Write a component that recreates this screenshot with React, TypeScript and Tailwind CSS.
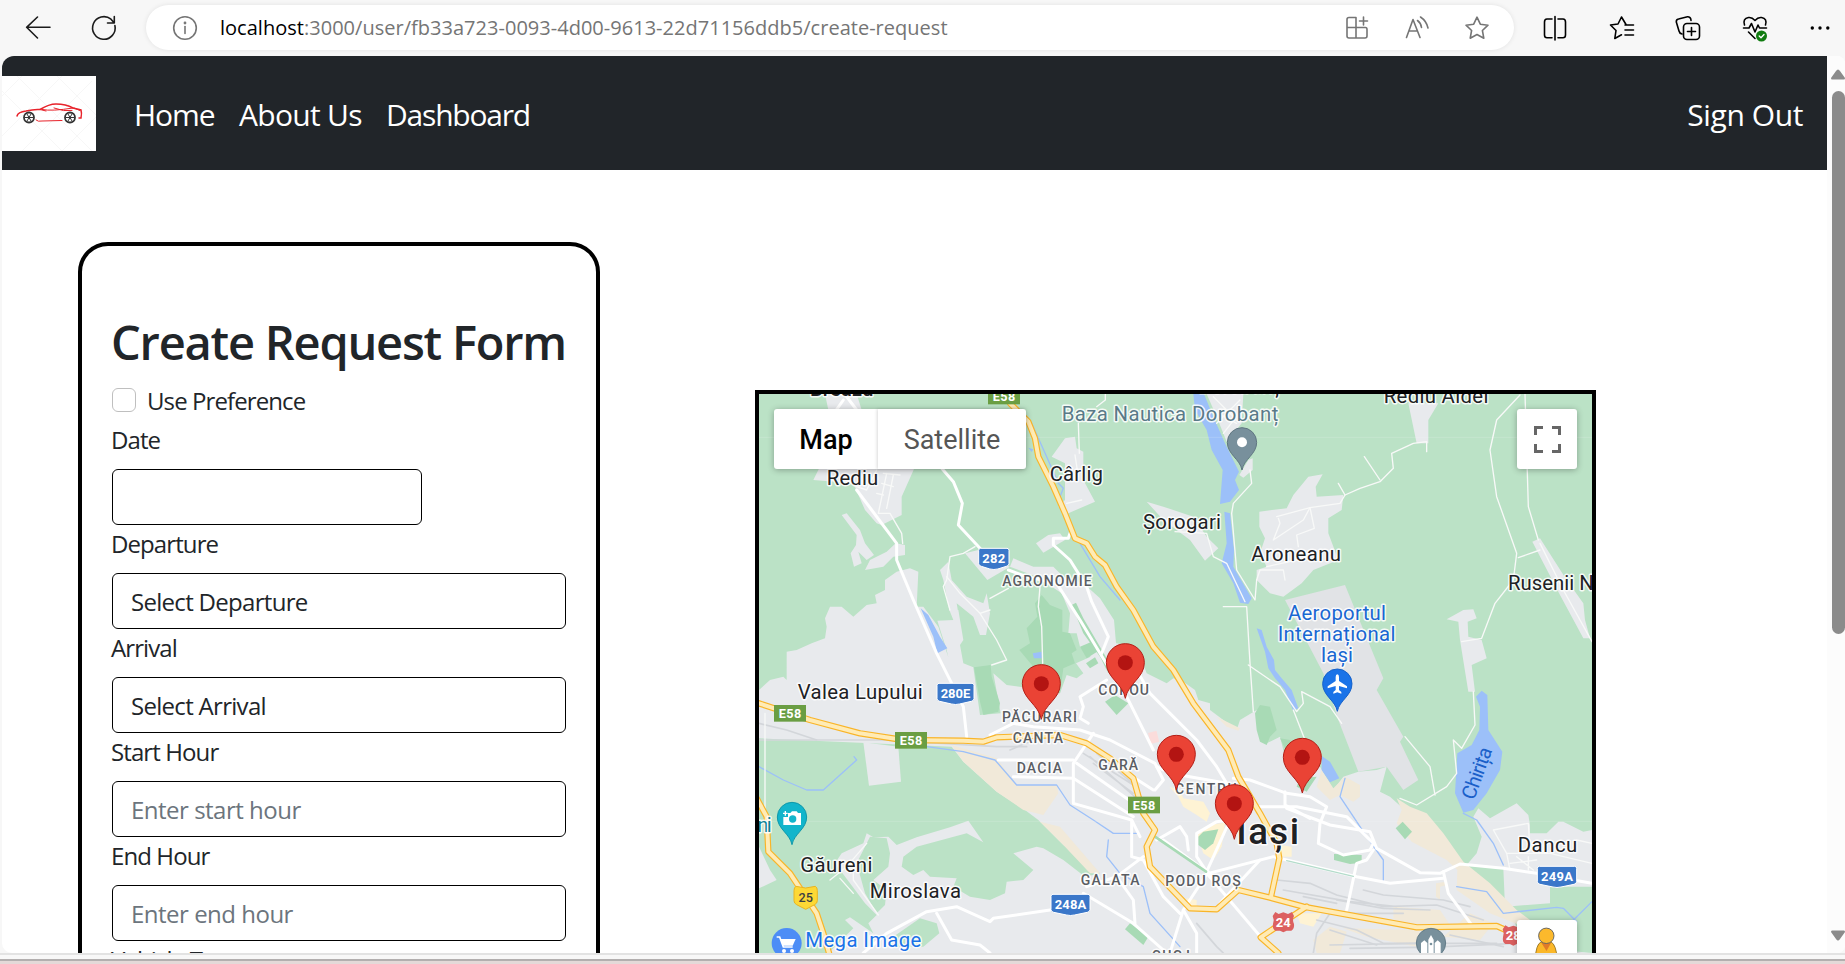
import type { ReactNode } from "react";

const UI = "font-['Open_Sans','Noto_Sans',sans-serif]";

/* ---------- browser toolbar ---------- */

function Icon({ children, className = "", w = 28 }: { children: ReactNode; className?: string; w?: number }) {
  return (
    <svg width={w} height={28} viewBox={`0 0 ${w} 28`} fill="none" stroke="currentColor" strokeWidth={1.6} strokeLinecap="round" strokeLinejoin="round" className={`shrink-0 ${className}`}>
      {children}
    </svg>
  );
}

const STAR = "M14 3.2 L17.3 10.2 L25 11.2 L19.4 16.5 L20.8 24.2 L14 20.5 L7.2 24.2 L8.6 16.5 L3 11.2 L10.7 10.2 Z";

function Toolbar() {
  return (
    <header className="flex h-[56px] shrink-0 items-start bg-[#f7f7f7] text-[#1b1b1b]">
      <div className="flex h-[55px] w-[146px] items-center gap-[38px] pl-[24px]">
        <Icon>
          <path d="M26 13.3H3M13.5 3L2.6 13.3L13.5 24" />
        </Icon>
        <Icon>
          <path d="M24.900 11.500A11.300 11.300 0 1 1 21 5.200L24.300 9M24.300 2.500V9H17.500" />
        </Icon>
      </div>
      <div className="mt-[5px] flex h-[45px] w-[1368px] items-center rounded-full bg-white pl-[25px] pr-[23px] text-[#757575] shadow-[0_0_5px_rgba(0,0,0,0.09)]">
        <Icon>
          <circle cx="14" cy="14" r="11.3" />
          <path d="M14 12.5V19.5" />
          <circle cx="14" cy="9" r="0.6" fill="currentColor" />
        </Icon>
        <span className={`ml-[21px] whitespace-nowrap text-[20px] leading-none tracking-[0.02px] ${UI}`}>
          <span className="text-black">localhost</span>:3000/user/fb33a723-0093-4d00-9613-22d71156ddb5/create-request
        </span>
        <div className="ml-auto flex gap-[32px]">
          <Icon>
            <path d="M4 5.5Q4 3.5 6 3.5H13V24H6Q4 24 4 22ZM4 13.5H22.5Q24 13.5 24 15.5V22Q24 24 22 24H13M20.5 3V11M16.5 7H24.5" />
          </Icon>
          <Icon>
            <path d="M3.500 23.500L10 5.500L17 23.500M6 17H14.500M14.500 6.500Q18 9 18.500 13.500M17.500 3Q23.500 7 25 14" />
          </Icon>
          <Icon>
            <path d={STAR} />
          </Icon>
        </div>
      </div>
      <div className="flex h-[55px] flex-1 items-center gap-[38.5px] pl-[27px] text-black">
        <Icon>
          <path d="M11 5H6Q3.500 5 3.500 8V21Q3.500 23.700 6 23.700H11M17 5H22Q24.500 5 24.500 8V21Q24.500 23.700 22 23.700H17M14 2.500V26" />
        </Icon>
        <Icon>
          <path d="M18 10.500L13.500 3L10 10L2.500 11L8 16.500L6.800 24.500L13.500 20.800M17 11H25.500M17 16H25.500M17 21H25.500" />
        </Icon>
        <Icon>
          <path d="M8 20Q5.500 19.500 5 17L2.300 8Q2 5.500 4.500 5L13.500 2.700Q16 2.500 16.800 5L17 6.500" />
          <rect x="9.500" y="9.500" width="16" height="16" rx="3.500" />
          <path d="M17.500 13.500V21.500M13.500 17.500H21.500" />
        </Icon>
        <Icon>
          <path d="M3.500 11Q1.500 4.500 7.500 3.500Q11 3 14 6.500Q17 3 20.500 3.500Q26.500 4.500 24.500 11M2.500 14H8L10.500 9.500L14 18L17 11L18.500 14H25.500M7.500 18L14 24.500" />
          <circle cx="20.500" cy="22" r="5.500" fill="#107c10" stroke="none" />
          <path d="M18.200 22L20 23.800L23 20.500" stroke="#fff" strokeWidth="1.300" />
        </Icon>
        <Icon>
          <g fill="currentColor" stroke="none">
            <circle cx="5.300" cy="14" r="1.700" />
            <circle cx="13" cy="14" r="1.700" />
            <circle cx="20.800" cy="14" r="1.700" />
          </g>
        </Icon>
      </div>
    </header>
  );
}

/* ---------- site header ---------- */

function CarLogo() {
  return (
    <svg viewBox="0 0 94 75" className="h-[75px] w-[94px] bg-white">
      <g stroke="#f7f7f7" strokeWidth="1">
        <path d="M0 20L20 0M0 60L60 0M20 75L90 5M60 75L94 41M0 15L60 75M15 0L90 75M55 0L94 39" />
      </g>
      <g fill="none" stroke="#e8232b" strokeWidth="1.500" strokeLinecap="round">
        <path d="M15 40Q16 36 24 35Q32 33 38 33.500Q47 28 54 28Q64 28 71 32L79 34Q80 37 79 42H77" />
        <path d="M38 33.500L44 35M40 33.500Q50 35.500 71 32M52 32Q62 36 70 34.500M34 44Q36 46 40 45L60 44.500M72 32L78 34.500" strokeWidth="1" />
      </g>
      {[27, 68].map((x) => (
        <g key={x} fill="none" stroke="#333">
          <circle cx={x} cy="41.500" r="5" strokeWidth="1.800" />
          <path d={`M${x - 4} 41.500h8M${x - 2} 38l4 7M${x + 2} 38l-4 7`} strokeWidth="1" />
        </g>
      ))}
    </svg>
  );
}

function SiteNav() {
  return (
    <nav className={`flex h-[114px] shrink-0 items-center bg-[#212529] pr-[24px] text-[30px] leading-none text-white ${UI}`}>
      <CarLogo />
      <div className="ml-[38px] flex gap-[22px] whitespace-nowrap pt-[3px]">
        <a className="w-[83px] tracking-[-1.1px]">Home</a>
        <a className="w-[125px] tracking-[-0.7px]">About Us</a>
        <a className="tracking-[-1.2px]">Dashboard</a>
      </div>
      <a className="ml-auto whitespace-nowrap pt-[3px] tracking-[-0.4px]">Sign Out</a>
    </nav>
  );
}

/* ---------- form ---------- */

function Field({ label, text, placeholder, narrow }: { label: string; text?: string; placeholder?: string; narrow?: boolean }) {
  return (
    <div className="h-[104px]">
      <div className="-ml-px flex h-[48px] items-start pt-[1px] leading-[36px] tracking-[-0.9px]">{label}</div>
      <div className={`flex h-[56px] items-center rounded-[6px] border border-black pl-[18px] pt-[2px] ${narrow ? "w-[310px]" : "w-[454px]"}`}>
        {text && <span className="tracking-[-0.7px]">{text}</span>}
        {placeholder && <span className="text-[#6c757d]">{placeholder}</span>}
      </div>
    </div>
  );
}

function RequestForm() {
  return (
    <section className={`ml-[76px] mt-[72px] h-[1100px] w-[522px] shrink-0 whitespace-nowrap rounded-[30px] border-4 border-black px-[30px] pt-[66px] text-[24px] tracking-[-0.5px] text-[#212529] ${UI}`}>
      <h1 className="-ml-px h-[71px] text-[47px] font-semibold leading-[61px] tracking-[-1.22px]">Create Request Form</h1>
      <label className="flex h-[38px] items-center gap-[11px] pb-[4px]">
        <span className="h-[24px] w-[24px] shrink-0 rounded-[6px] border border-[#bfbfbf]" />
        <span className="pt-[2px] tracking-[-0.9px]">Use Preference</span>
      </label>
      <Field label="Date" narrow />
      <Field label="Departure" text="Select Departure" />
      <Field label="Arrival" text="Select Arrival" />
      <Field label="Start Hour" placeholder="Enter start hour" />
      <Field label="End Hour" placeholder="Enter end hour" />
      <Field label="Vehicle Type" />
    </section>
  );
}

/* ---------- map ---------- */

const URBAN = [
  "27,930 60,900 100,890 110,900 110,815 140,810 185,790 225,775 230,740 225,715 240,680 275,680 310,710 350,675 380,670 375,645 405,630 405,600 440,575 480,565 505,575 500,680 520,680 565,740 595,832 590,810 562,722 610,720 598,690 625,690 640,780 630,795 640,850 670,862 690,1005 752,1000 730,880 770,915 840,925 930,940 950,885 980,895 1000,880 978,850 1022,830 990,800 980,760 955,760 960,700 935,640 860,590 780,560 790,535 850,560 910,560 940,590 1000,610 1050,655 1092,720 1098,790 1160,800 1190,880 1250,910 1270,895 1300,905 1335,930 1345,960 1380,970 1380,990 1460,1050 1470,1020 1520,990 1525,1055 1550,1090 1590,1070 1605,1130 1710,1160 1750,1230 1780,1190 1825,1175 1880,1170 1910,1160 1890,1235 1920,1250 2150,1455 2180,1420 2195,1370 2170,1310 2185,1285 2220,1315 2300,1270 2335,1305 2340,1335 2340,1360 2390,1360 2425,1325 2440,1325 2500,1355 2526,1350 2526,1719 27,1719",
  "225,42 320,42 335,90 235,90",
  "190,300 215,250 495,260 455,350 455,405 395,435 380,430 345,390 310,310",
  "275,405 290,400 330,450 345,490 372,525 350,540 325,515 335,550 312,560 302,520 318,495 320,465",
  "345,570 360,540 410,515 437,490 465,495 465,525 430,530 400,560",
  "645,520 685,510 780,560 712,600",
  "570,570 595,545 605,600 650,650 700,670 710,640 720,700 708,765 690,765 670,710 620,670 625,700 598,690 580,600",
  "858,490 895,465 930,460 945,480 880,518",
  "945,175 975,170 980,205 1000,215 1000,300 1035,365 950,402 925,380 945,360 945,250 905,230",
  "1370,42 1480,42 1475,130 1430,185 1400,110",
  "1495,240 1508,235 1508,270 1480,293 1468,285",
  "1528,395 1610,385 1630,345 1675,290 1718,283 1697,320 1700,350 1780,345 1775,390 1735,415 1735,460 1765,540 1690,570 1655,610 1600,650 1560,640 1520,600 1520,570 1550,560 1530,520 1545,475 1528,440",
  "1190,365 1240,380 1330,410 1370,470 1405,505 1365,542 1320,480 1240,420",
  "1975,70 2065,70 2035,120 2035,190 2000,190",
  "2347,485 2370,475 2450,600 2500,670 2505,720 2520,775 2500,775 2430,645",
  "2090,718 2140,690 2170,688 2180,715 2153,725 2155,770 2195,780 2210,835 2165,855 2175,935 2155,935 2130,780 2125,725",
];

const GREEN = [
  "27,1075 605,1100 640,1145 740,1235 825,1290 865,1320 940,1395 1050,1480 1005,1490 940,1440 880,1405 860,1400 790,1420 850,1470 820,1500 770,1505 765,1540 720,1560 660,1550 610,1520 620,1495 540,1490 520,1470 490,1485 455,1460 460,1430 500,1400 650,1360 700,1387 655,1322 600,1342 500,1372 440,1395 415,1370 370,1372 350,1360 340,1390 275,1420 255,1450 300,1510 345,1570 380,1605 355,1630 370,1660 300,1612 285,1620 310,1645 235,1719 27,1719 27,1525 80,1500 60,1470 27,1400",
  "360,1370 410,1375 420,1420 415,1460 370,1500 410,1530 405,1575 380,1600 345,1540 320,1450",
  "430,1670 510,1615 560,1630 568,1660 520,1700 440,1700",
  "2150,1455 2260,1465 2265,1580 2400,1570 2400,1520 2526,1520 2526,1719 2330,1700 2270,1580",
  "27,870 80,870 60,895 27,920",
];

const PARK = [
  "855,670 875,645 900,675 937,690 937,755 960,760 980,810 965,820 975,850 940,865 930,940 850,930 835,870 850,860 808,810 840,790 830,745 862,710",
  "672,862 722,855 725,890 750,970 745,995 700,1005 690,965",
  "965,675 978,668 1000,715 1050,800 1090,870 1075,880 1050,830 1000,760",
  "990,800 1025,785 1050,810 1010,835",
  "1008,850 1035,832 1045,850 1020,865",
  "1065,965 1095,945 1135,970 1100,1005",
  "1515,1000 1530,975 1560,980 1580,1050 1560,1070 1550,1095 1530,1085 1520,1050",
  "1345,1370 1360,1355 1405,1348 1390,1390 1365,1410 1345,1395",
  "1937,1345 1958,1325 1986,1355 1965,1378",
  "1125,1648 1140,1630 1195,1670 1180,1695",
  "1650,1195 1700,1190 1670,1235 1640,1220",
  "1590,1075 1620,1080 1640,1110 1610,1115",
  "1752,1422 1835,1425 1835,1448 1800,1452 1752,1440",
];

const BEIGE = [
  "605,1095 740,1135 800,1215 920,1215 925,1240 880,1305 820,1290 740,1235 640,1145",
  "870,1325 930,1340 1050,1480 1020,1480 940,1395",
  "1380,990 1400,1010 1470,1045 1465,1052 1430,1040",
  "1715,1170 1750,1225 1785,1190 1830,1215 1830,1250 1810,1265 1770,1245 1740,1260 1700,1220",
  "1940,1255 1980,1280 2030,1300 2080,1360 2140,1445 2220,1510 2300,1590 2340,1620 2300,1632 2220,1600 2120,1530 2122,1470 2090,1440 1985,1385 1940,1330 1955,1290",
  "2058,1510 2090,1505 2090,1515 2070,1520 2070,1560 2058,1550",
  "1930,1580 2070,1590 2100,1635 2000,1645 1930,1620",
  "1740,1640 1790,1655 1770,1719 1700,1719 1690,1680",
  "1780,1645 2010,1650 2000,1700 1850,1670",
  "2080,1670 2160,1600 2230,1630 2190,1680",
];

const YELLOW = [
  "1258,1220 1290,1230 1300,1255 1330,1260 1360,1265 1380,1300 1370,1325 1340,1305 1300,1280 1285,1250",
  "1340,1360 1375,1335 1425,1328 1415,1400 1390,1440 1360,1420",
  "1590,1395 1625,1400 1625,1430 1590,1430",
  "1640,1600 1715,1600 1690,1640 1650,1630",
  "1310,1555 1340,1560 1340,1590 1310,1585",
];

const WATER = [
  "1330,42 1362,42 1390,110 1425,190 1467,275 1455,300 1467,330 1440,365 1410,372 1418,270 1385,210 1370,150 1335,90",
  "1423,395 1440,400 1452,510 1450,560 1505,655 1495,672 1470,668 1450,610 1415,550 1430,490",
  "1520,745 1535,750 1550,800 1572,840 1575,870 1595,895 1625,930 1645,985 1630,992 1605,930 1575,895 1555,865 1545,815",
  "1715,1128 1740,1145 1768,1195 1740,1207 1715,1170",
  "2178,950 2195,932 2212,945 2215,1050 2257,1115 2250,1170 2210,1240 2170,1290 2140,1298 2115,1240 2122,1120 2165,1095 2188,1050 2190,980",
  "512,685 535,705 570,770 592,805 562,820 550,770",
  "848,820 875,815 875,835 852,835",
  "835,203 850,208 845,216",
];

const STREAMS = [
  "845,130 890,230 925,310 940,325 930,350",
  "990,490 1050,590 1110,660",
  "530,1100 640,1115 735,1140 800,1215 920,1215 960,1275 1030,1320 1090,1360 1160,1360",
  "27,1160 100,1200 170,1230 220,1230 320,1140 312,1130",
  "2140,1300 2180,1320 2230,1390 2260,1455",
  "1785,1195 1770,1250 1850,1370 1900,1440 1900,1500",
  "2120,1520 2210,1535 2260,1600 2420,1582 2440,1585 2480,1625",
  "1075,1380 1070,1430 1110,1480 1180,1520 1200,1600 1290,1700",
  "2450,1640 2526,1565",
];

const MINOR = [
  "320,320 350,330 380,270 M410,280 385,400 M430,285 410,385 M385,400 420,400 455,460 458,490",
  "395,310 430,320 M400,280 450,285 M380,340 400,345",
  "985,130 988,220 M975,225 985,290 M950,370 995,360",
  "1066,42 1066,60 1040,80",
  "675,500 640,520 600,530 590,600 580,620 600,690",
  "590,590 630,640 690,700 720,690 M690,700 740,780 770,840 725,855",
  "775,625 720,655 M870,620 865,680 875,740 878,850",
  "1500,270 1505,310 1450,370 1445,400 1460,570 1515,660 1520,600",
  "1520,600 1530,570 1600,570 1605,600 M1550,560 1640,540 M1570,480 1660,420 1680,383 M1585,415 1590,430 1570,480",
  "1580,410 1680,383 1770,370 1785,345 1830,325 1890,305 1930,265 1925,220 1990,190 2030,185 2030,215",
  "1765,310 1785,345 M1843,230 1890,300 M1680,383 1693,445 1640,465 1645,500",
  "2310,45 2240,120 2220,210 2240,350 2300,520 2290,600 2235,670 2195,775 2135,785 M2325,42 2335,380 2365,480",
  "2305,533 2370,510",
  "2370,490 2440,630 2526,785",
  "2170,935 2175,1035 2135,1105 2110,1080 2120,1180 2090,1220 2000,1275 1950,1255",
  "1965,1070 2040,1160 2055,1245",
  "1420,680 1490,680 1500,850 1510,995 M1495,855 1590,920 1640,995 1660,970 1655,935 1740,980 1775,1030",
  "1630,990 1665,1080 1700,1160",
  "1275,455 1370,460 1390,530 1430,550 1485,665",
  "1385,90 1460,130 M1390,50 1460,120 M1400,130 1470,60 M1420,160 1475,90",
  "2230,1350 2335,1330 2340,1410 M2230,1350 2270,1420 2280,1470 M2270,1420 2400,1420 2526,1450 M2480,1380 2526,1390",
  "2280,1450 2360,1440 M2300,1430 2350,1470 M2335,1430 2335,1470",
  "45,1000 45,1300 M240,1500 290,1460 350,1390 M270,1495 310,1540 M310,1450 310,1500 385,1605",
];

const ROADS = [
  "245,110 280,60 M290,50 320,90",
  "320,330 365,390 440,490 440,540 490,660 560,820 610,920 640,980 650,1070",
  "575,265 610,305 637,370 625,435 690,505",
  "960,460 955,475 910,475 910,495 960,540 1010,620 1025,665 1075,770 1055,820",
  "775,570 830,590 920,610 990,720 1050,820 1130,950 1210,1110",
  "720,1065 790,1030 850,1040 990,1050 1080,1080 1215,1150 1240,1200 1215,1230",
  "1030,1060 970,1150 970,1270 1145,1320 1170,1370",
  "745,1140 970,1140 M790,1190 970,1195 1150,1310",
  "980,1150 1080,1220 1180,1290",
  "1110,870 1160,870 1200,940 1260,1000 1340,1080 1400,1160 1430,1210",
  "1070,900 990,950 1000,980 990,1015 1015,1030",
  "1450,1195 1500,1200 1610,1240 1680,1250 1730,1280 1710,1330 1705,1390 1780,1425 1860,1410 1870,1390 1790,1310 1640,1280 1530,1280 1450,1290",
  "1605,1235 1605,1275 1680,1315 M1610,1285 1740,1335 1860,1355 1880,1405 2010,1478 2070,1480 2130,1452 2260,1465 2360,1480",
  "1220,1160 1240,1170 M1260,1180 1430,1210",
  "1370,1475 1440,1320 M1370,1475 1340,1430 1340,1360 1400,1325 1440,1320",
  "1375,1480 1570,1430 1610,1440 1820,1490 1920,1510 2080,1495",
  "1790,1590 1820,1450 1850,1440 1870,1410",
  "2080,1475 2095,1540 2165,1635",
  "1220,1380 1290,1340 1310,1370 1315,1410 M1260,1719 1300,1590 1375,1475",
  "1370,1480 1540,1680 M1240,1380 1390,1490 M1410,1570 1530,1440",
  "1300,1590 1340,1660 1340,1719",
  "1180,1430 1100,1490 1010,1520 M900,1590 730,1615 720,1625 620,1580 530,1595 410,1660 340,1719",
  "1145,1320 1145,1430 1180,1440 1240,1550 1290,1600",
  "560,1600 605,1680 690,1695 720,1719",
  "1000,1540 1150,1630 1250,1719",
  "1100,1490 1150,1560 1155,1630",
  "1155,1195 1210,1230",
  "2470,1500 2526,1510",
];

const RAILS = [
  "27,1080 400,1080 740,1100 830,1100",
  "27,1030 110,1050 200,1080",
  "1000,1120 1150,1215 1170,1240 M1020,1130 1165,1260 M1040,1120 1160,1220 M1030,1150 1150,1240 M780,1110 850,1080",
  "1580,1500 1680,1510 1760,1545 1900,1580 2060,1575 2200,1620 M1600,1530 1800,1565 1940,1580",
  "1840,1530 1900,1545 2080,1560 2160,1580 M1760,1560 1900,1585 2040,1590 M1660,1550 1760,1570",
  "1700,1620 1820,1650 1900,1690 2240,1690 M1740,1650 1880,1695 M1690,1719 1700,1660 1740,1600 1960,1600",
  "1740,1695 2000,1690 M1800,1705 2000,1702 M2080,1700 2300,1690 M2100,1665 2260,1700",
  "1340,1630 1400,1700 1420,1719",
];

const HIGHWAYS = [
  "780,70 835,125 855,175 865,230 910,320 945,400 975,475 1010,490 1035,530 1065,555 1100,620 1150,690 1210,800 1270,870 1330,970 1435,1110 1465,1190 1530,1300 1580,1390 1588,1435 1563,1550",
  "27,970 180,1020 330,1060 460,1080 640,1082 700,1085 740,1072 930,1065 1010,1090 1080,1135 1150,1195 1180,1300 1215,1350 1190,1400 1200,1460 1320,1585 1400,1588 1465,1530 1560,1553 1660,1580 2000,1642 2240,1638 2290,1660",
  "1670,1580 1532,1672 1585,1719",
  "20,1255 50,1310 55,1415 120,1480 160,1540 200,1600 220,1660 237,1719",
];

function toPath(p: string) {
  return p.startsWith("M") ? p : `M${p}`;
}

function Lines({ data, stroke, width }: { data: string[]; stroke: string; width: number }) {
  return (
    <g fill="none" stroke={stroke} strokeWidth={width} strokeLinejoin="round" strokeLinecap="round">
      {data.map((d) => (
        <path key={d} d={toPath(d)} />
      ))}
    </g>
  );
}

function Areas({ data, fill }: { data: string[]; fill: string }) {
  return (
    <g fill={fill}>
      {data.map((d) => (
        <polygon key={d} points={d} />
      ))}
    </g>
  );
}

type LabelSpec = { t: string; x: number; y: number; w?: number; s?: number; c?: string; b?: number };

const LABELS: LabelSpec[] = [
  { t: "Breazu", x: 180, y: 47, w: 190, s: 60, b: 500 },
  { t: "Rediu", x: 230, y: 315, w: 155 },
  { t: "Cârlig", x: 899, y: 303, w: 160 },
  { t: "Șorogari", x: 1179, y: 448, w: 234 },
  { t: "Aroneanu", x: 1504, y: 543, w: 269 },
  { t: "Rusenii Noi", x: 2274, y: 630 },
  { t: "Dorobanț", x: 1345, y: 38, w: 243 },
  { t: "Rediu Aldei", x: 1901, y: 68, w: 314 },
  { t: "Baza Nautica Dorobanț", x: 935, y: 123, w: 650, c: "#5a7a88" },
  { t: "Aeroportul", x: 1614, y: 721, w: 294, c: "#1967d2" },
  { t: "Internațional", x: 1583, y: 784, w: 353, c: "#1967d2" },
  { t: "Iași", x: 1712, y: 847, w: 97, c: "#1967d2" },
  { t: "Valea Lupului", x: 143, y: 957, w: 375 },
  { t: "Găureni", x: 151, y: 1475, w: 216 },
  { t: "Miroslava", x: 359, y: 1553, w: 274 },
  { t: "Mega Image", x: 166, y: 1702, w: 348, c: "#1a73e8" },
  { t: "ni", x: 22, y: 1355, w: 43, c: "#0d8296" },
  { t: "Dancu", x: 2303, y: 1415, w: 179 },
  { t: "AGRONOMIE", x: 757, y: 617, w: 268, s: 42, c: "#5a5d63", b: 500 },
  { t: "PĂCURARI", x: 756, y: 1027, w: 225, s: 42, c: "#5a5d63", b: 500 },
  { t: "CANTA", x: 788, y: 1090, w: 151, s: 42, c: "#5a5d63", b: 500 },
  { t: "DACIA", x: 800, y: 1180, w: 136, s: 42, c: "#5a5d63", b: 500 },
  { t: "GARĂ", x: 1045, y: 1169, w: 119, s: 42, c: "#5a5d63", b: 500 },
  { t: "COPOU", x: 1045, y: 946, w: 152, s: 42, c: "#5a5d63", b: 500 },
  { t: "CENTRU", x: 1275, y: 1242, w: 185, s: 42, c: "#5a5d63", b: 500 },
  { t: "GALATA", x: 992, y: 1516, w: 177, s: 42, c: "#5a5d63", b: 500 },
  { t: "PODU ROȘ", x: 1246, y: 1518, w: 226, s: 42, c: "#5a5d63", b: 500 },
  { t: "C.U.G. I", x: 1205, y: 1743, w: 115, s: 42, c: "#5a5d63", b: 500 },
  { t: "Iași", x: 1459, y: 1391, w: 188, s: 110, b: 500 },
];

function RedPin({ x, y }: { x: number; y: number }) {
  return (
    <g transform={`translate(${x} ${y})`}>
      <path d="M0 107C-8 62 -57 46 -57 0A57 57 0 0 1 57 0C57 46 8 62 0 107Z" fill="#ea4335" stroke="#b31f17" strokeWidth="3" />
      <circle r="22.500" fill="#b31412" />
    </g>
  );
}

function PoiPin({ x, y, fill, edge, children }: { x: number; y: number; fill: string; edge: string; children: ReactNode }) {
  return (
    <g transform={`translate(${x} ${y})`}>
      <path d="M0 83C-6 50 -44 36 -44 0A44 44 0 0 1 44 0C44 36 6 50 0 83Z" fill={fill} stroke={edge} strokeWidth="3" />
      {children}
    </g>
  );
}

function EuroShield({ x, y }: { x: number; y: number }) {
  return (
    <g transform={`translate(${x} ${y})`}>
      <rect width="96" height="50" fill="#6a9e43" />
      <text x="48" y="39" textAnchor="middle" fontSize="38" fontWeight="700" fill="#fff" textLength="68">E58</text>
    </g>
  );
}

function BlueShield({ x, y, w, t }: { x: number; y: number; w: number; t: string }) {
  return (
    <g transform={`translate(${x} ${y})`}>
      <path d={`M6 0H${w - 6}Q${w} 0 ${w} 6V46Q${w} 52 ${w - 8} 54L${w / 2 + 12} 62Q${w / 2} 65 ${w / 2 - 12} 62L8 54Q0 52 0 46V6Q0 0 6 0Z`} fill="#3a77c9" stroke="#fff" strokeWidth="3" />
      <text x={w / 2} y="45" textAnchor="middle" fontSize="39" fontWeight="700" fill="#fff" textLength={w - 22}>{t}</text>
    </g>
  );
}

function RedShield({ x, y, t }: { x: number; y: number; t: string }) {
  return (
    <g transform={`translate(${x} ${y})`}>
      <path d="M8 0L18 6L32 1L46 6L58 0L64 12Q58 24 64 36Q66 50 56 56L42 56L32 61L22 56L8 56Q-2 50 1 36Q6 24 0 12Z" fill="#dc6060" />
      <text x="32" y="45" textAnchor="middle" fontSize="39" fontWeight="700" fill="#fff">{t}</text>
    </g>
  );
}

function CityMap() {
  return (
    <svg viewBox="27 42 2499 1677" className="block h-[559px] w-[833px] bg-[#bbe2c6] font-['Roboto',sans-serif]">
      <Areas data={URBAN} fill="#e8eaed" />
      <polygon points="1605,660 1785,615 1900,895 1880,930 1960,1070 1950,1085 2005,1200 1960,1230 1910,1160 1825,1175 1765,1020 1720,880" fill="#e1e3e6" />
      <Areas data={GREEN} fill="#bbe2c6" />
      <polygon points="340,1087 445,1100 453,1205 357,1217" fill="#e8eaed" />
      <Areas data={BEIGE} fill="#f1e9d9" />
      <Areas data={YELLOW} fill="#fef3d4" />
      <Areas data={PARK} fill="#a8dab5" />
      <rect x="1198" y="1055" width="26" height="34" fill="#fbdcdb" transform="rotate(-14 1211 1072)" />
      <Lines data={RAILS} stroke="#d3d6da" width={5} />
      <Lines data={STREAMS} stroke="#9cc0f9" width={4} />
      <Areas data={WATER} fill="#9cc0f9" />
      <path d="M27 172H2526M27 1324H2526" stroke="#fff" strokeWidth="3" opacity="0.150" />
      <Lines data={MINOR} stroke="#f8f9f8" width={4} />
      <Lines data={ROADS} stroke="#fff" width={9} />
      <Lines data={["1215,1370 1368,1475"]} stroke="#a8dab5" width={8} />
      <Lines data={["1610,1442 1810,1489"]} stroke="#b4dccb" width={4} />
      <Lines data={HIGHWAYS} stroke="#f9b529" width={19} />
      <Lines data={HIGHWAYS} stroke="#ffebb5" width={12} />

      <g stroke="#fff" strokeWidth="9" strokeOpacity="0.850" strokeLinejoin="round" style={{ paintOrder: "stroke" }}>
        {LABELS.map((l) => (
          <text key={`${l.t}${l.x}`} x={l.x} y={l.y} fontSize={l.s ?? 61} fontWeight={l.b ?? 400} fill={l.c ?? "#202124"} textLength={l.w}>
            {l.t}
          </text>
        ))}
      </g>
      <text transform="translate(2172 1262) rotate(-70)" fontSize="60" fill="#1a5fc9" textLength="162">Chirița</text>

      <EuroShield x={714} y={23} />
      <EuroShield x={72} y={975} />
      <EuroShield x={435} y={1056} />
      <EuroShield x={1134} y={1250} />
      <BlueShield x={686} y={505} w={91} t="282" />
      <BlueShield x={561} y={910} w={111} t="280E" />
      <BlueShield x={903} y={1543} w={117} t="248A" />
      <BlueShield x={2362} y={1459} w={118} t="249A" />
      <RedShield x={1568} y={1596} t="24" />
      <RedShield x={2258} y={1636} t="28" />
      <path d="M138 1519L167 1524L196 1519Q202 1522 202 1532V1562Q202 1570 194 1574L167 1588L140 1574Q132 1570 132 1562V1532Q132 1522 138 1519Z" fill="#fdd835" stroke="#e8b422" strokeWidth="3" />
      <text x="167" y="1567" textAnchor="middle" fontSize="38" fontWeight="500" fill="#3c4043">25</text>

      <PoiPin x={1476} y={187} fill="#78909c" edge="#5f7681">
        <circle r="15" fill="#fff" />
      </PoiPin>
      <PoiPin x={1762} y={911} fill="#1a73e8" edge="#1662ca">
        <path d="M0 -28Q5 -28 5 -20V-8L29 8V14L5 7V19L12 25V30L0 26L-12 30V25L-5 19V7L-29 14V8L-5 -8V-20Q-5 -28 0 -28Z" fill="#fff" />
      </PoiPin>
      <PoiPin x={126} y={1311} fill="#12b5cb" edge="#0f98aa">
        <path d="M-26 0H-12V-12H-5L0 -17H14L18 -12H27V24H-26Z" fill="#fff" />
        <circle cx="2" cy="6" r="11" fill="#12b5cb" />
        <path d="M-20 -18V-4M-27 -11H-13" stroke="#fff" strokeWidth="4" />
      </PoiPin>
      <g transform="translate(110 1689)">
        <circle r="45" fill="#4d8df6" />
        <path d="M-30 -18H-21L-10 12H18" fill="none" stroke="#fff" strokeWidth="5" />
        <path d="M-18 -12H27L18 8H-11Z" fill="#fff" />
        <circle cx="-8" cy="24" r="6" fill="#fff" />
        <circle cx="16" cy="24" r="6" fill="#fff" />
      </g>
      <g transform="translate(2043 1689)">
        <circle r="44" fill="#78909c" stroke="#637c88" strokeWidth="3" />
        <path d="M-30 30V0L-20 -8L-11 0V30ZM-8 30V-10L0 -24L8 -10V30ZM11 30V0L20 -8L29 0V30Z" fill="#fff" />
        <circle cy="3" r="4" fill="#78909c" />
      </g>

      <RedPin x={874} y={911} />
      <RedPin x={1126} y={848} />
      <RedPin x={1279} y={1123} />
      <RedPin x={1657} y={1132} />
      <RedPin x={1453} y={1271} />
    </svg>
  );
}

function MapPanel() {
  return (
    <section className="relative ml-[155px] mt-[220px] h-[900px] w-[841px] shrink-0 overflow-hidden border-4 border-black">
      <CityMap />
      <div className="absolute left-[15px] top-[15px] flex h-[60px] w-[252px] rounded-[3px] bg-white font-['Roboto',sans-serif] text-[27px] shadow-[0_1px_6px_rgba(0,0,0,0.3)]">
        <button className="w-[104px] rounded-l-[3px] text-center font-medium leading-[62px] text-black">Map</button>
        <button className="w-[148px] text-center leading-[62px] text-[#565656] shadow-[-1px_0_3px_rgba(0,0,0,0.15)]">Satellite</button>
      </div>
      <button className="absolute right-[15px] top-[15px] flex h-[60px] w-[60px] items-center justify-center rounded-[3px] bg-white shadow-[0_1px_6px_rgba(0,0,0,0.3)]">
        <svg viewBox="0 0 27 27" className="h-[27px] w-[27px]" fill="none" stroke="#666" strokeWidth="3">
          <path d="M1.500 9V1.500H9M18 1.500H25.500V9M25.500 18V25.500H18M9 25.500H1.500V18" />
        </svg>
      </button>
      <div className="absolute right-[15px] top-[526px] h-[60px] w-[60px] rounded-[3px] bg-white shadow-[0_1px_6px_rgba(0,0,0,0.3)]">
        <svg viewBox="0 0 60 60" className="h-[60px] w-[60px]">
          <path d="M18 40Q19 24 24 22H34Q39 24 40.500 40V50H18Z" fill="#fbb829" stroke="#8a6a1c" strokeWidth="0.800" />
          <path d="M24.500 23H34L29.500 31Z" fill="#e07b28" />
          <circle cx="29.300" cy="15.800" r="7.700" fill="#fcb92c" stroke="#5a5f66" strokeWidth="0.900" />
        </svg>
      </div>
    </section>
  );
}

/* ---------- scroll bar and window ---------- */

function ScrollBar() {
  return (
    <div className="flex w-[18px] shrink-0 flex-col items-end bg-[#fcfcfc] pt-[13px]">
      <svg width="14" height="11" viewBox="0 0 14 11">
        <path d="M7 0.500Q8 0.500 9 2L14 9Q14 10.500 13 10.500H1Q0 10.500 0 9L5 2Q6 0.500 7 0.500Z" fill="#8b8b8b" />
      </svg>
      <div className="mt-[11px] h-[543px] w-[13px] rounded-full bg-[#8b8b8b]" />
      <svg width="14" height="11" viewBox="0 0 14 11" className="mb-[12px] mt-auto">
        <path d="M7 10.500Q8 10.500 9 9L14 2Q14 0.500 13 0.500H1Q0 0.500 0 2L5 9Q6 10.500 7 10.500Z" fill="#8b8b8b" />
      </svg>
    </div>
  );
}

export default function App() {
  return (
    <div className="flex h-[964px] w-[1845px] flex-col overflow-hidden bg-[#f7f7f7]">
      <Toolbar />
      <div className="ml-[2px] flex h-[897px] shrink-0 overflow-hidden rounded-bl-[10px] rounded-br-[8px] rounded-tl-[12px] rounded-tr-[8px] bg-white">
        <div className="flex h-full w-[1825px] shrink-0 flex-col overflow-hidden">
          <SiteNav />
          <main className="flex flex-1 items-start overflow-hidden">
            <RequestForm />
            <MapPanel />
          </main>
        </div>
        <ScrollBar />
      </div>
      <div className="h-[2px] shrink-0 bg-[#e3e3e3]" />
      <div className="h-[4px] shrink-0 bg-[#f8f8f8]" />
      <div className="h-[2px] shrink-0 bg-[#b3afaf]" />
      <div className="h-[3px] shrink-0 bg-[#e4d9d8]" />
    </div>
  );
}
